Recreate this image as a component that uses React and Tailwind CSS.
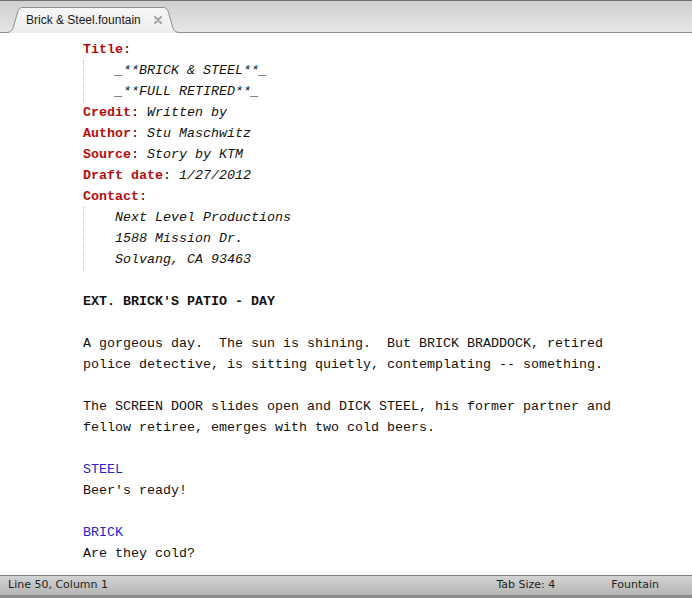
import React from 'react';

const mono = { fontFamily: '"Liberation Mono", "Courier New", monospace' };
const ui = { fontFamily: '"DejaVu Sans", "Liberation Sans", sans-serif' };

// one line of the title page: red bold key, italic value
function Key({ k, v }) {
  return (
    <div className="h-[21px] leading-[21px] whitespace-pre">
      <span className="font-bold text-[#b50d0d]">{k}</span>
      <span>:</span>
      {v && <span className="italic"> {v}</span>}
    </div>
  );
}

function Indented({ lines }) {
  return (
    <div className="border-l border-dotted border-[#bdbdbd] pl-[31px]">
      {lines.map((l) => (
        <div key={l} className="h-[21px] leading-[21px] italic whitespace-pre">{l}</div>
      ))}
    </div>
  );
}

function Line({ children, className = '' }) {
  return <div className={`h-[21px] leading-[21px] whitespace-pre ${className}`}>{children}</div>;
}

export default function App() {
  return (
    <div className="h-screen w-full flex flex-col bg-white overflow-hidden">
      {/* tab bar */}
      <div className="h-[33px] shrink-0 flex items-end border-t border-[#707070] border-b border-b-[#8c8c8c] bg-gradient-to-b from-[#cfcfcf] to-[#e6e6e6]">
        <div className="relative ml-[5px] w-[176px] h-[26px] -mb-px flex items-center">
          <svg className="absolute inset-0" width="176" height="26" viewBox="0 0 176 26">
            <defs>
              <linearGradient id="tabg" x1="0" y1="0" x2="0" y2="1">
                <stop offset="0" stopColor="#f7f7f7" />
                <stop offset="1" stopColor="#ececec" />
              </linearGradient>
            </defs>
            <path
              d="M0,26 C5,26 7,24 8,21 L13,4 C14,1.5 15.5,0.5 18,0.5 L158,0.5 C160.5,0.5 162,1.5 163,4 L168,21 C169,24 171,26 176,26 Z"
              fill="url(#tabg)"
            />
            <path
              d="M0,25.5 C5,25.5 7,24 8,21 L13,4 C14,1.5 15.5,0.5 18,0.5 L158,0.5 C160.5,0.5 162,1.5 163,4 L168,21 C169,24 171,25.5 176,25.5"
              fill="none"
              stroke="#8e8e8e"
              strokeWidth="1"
            />
          </svg>
          <span
            className="relative pl-[21px] text-[12px] text-[#1a1a1a] whitespace-nowrap"
            style={{ fontFamily: '"Liberation Sans", Arial, sans-serif' }}
          >
            Brick &amp; Steel.fountain
          </span>
          <svg className="relative ml-auto mr-[19px]" width="8" height="8" viewBox="0 0 8 8">
            <path d="M1,1 L7,7 M7,1 L1,7" stroke="#a2a2a2" strokeWidth="2" strokeLinecap="round" />
          </svg>
        </div>
      </div>

      {/* editor */}
      <div className="flex-1 overflow-hidden pt-[6px] pl-[83px] text-[13.33px] text-[#111]" style={mono}>
        <Key k="Title" />
        <Indented lines={['_**BRICK & STEEL**_', '_**FULL RETIRED**_']} />
        <Key k="Credit" v="Written by" />
        <Key k="Author" v="Stu Maschwitz" />
        <Key k="Source" v="Story by KTM" />
        <Key k="Draft date" v="1/27/2012" />
        <Key k="Contact" />
        <Indented lines={['Next Level Productions', '1588 Mission Dr.', 'Solvang, CA 93463']} />
        <Line />
        <Line className="font-bold">EXT. BRICK'S PATIO - DAY</Line>
        <Line />
        <Line>A gorgeous day.  The sun is shining.  But BRICK BRADDOCK, retired</Line>
        <Line>police detective, is sitting quietly, contemplating -- something.</Line>
        <Line />
        <Line>The SCREEN DOOR slides open and DICK STEEL, his former partner and</Line>
        <Line>fellow retiree, emerges with two cold beers.</Line>
        <Line />
        <Line className="text-[#2323d2]">STEEL</Line>
        <Line>Beer's ready!</Line>
        <Line />
        <Line className="text-[#2323d2]">BRICK</Line>
        <Line>Are they cold?</Line>
      </div>

      {/* status bar */}
      <div
        className="h-[20px] shrink-0 flex items-center border-t border-[#7d7d7d] bg-gradient-to-b from-[#d2d2d2] to-[#b6b6b6] text-[11px] text-[#1e1e1e]"
        style={ui}
      >
        <span className="pl-[8px]">Line 50, Column 1</span>
        <span className="ml-auto">Tab Size: 4</span>
        <span className="ml-[56px] mr-[33px]">Fountain</span>
      </div>
      <div className="h-[3px] shrink-0 bg-[#8a8a8a]" />
    </div>
  );
}
